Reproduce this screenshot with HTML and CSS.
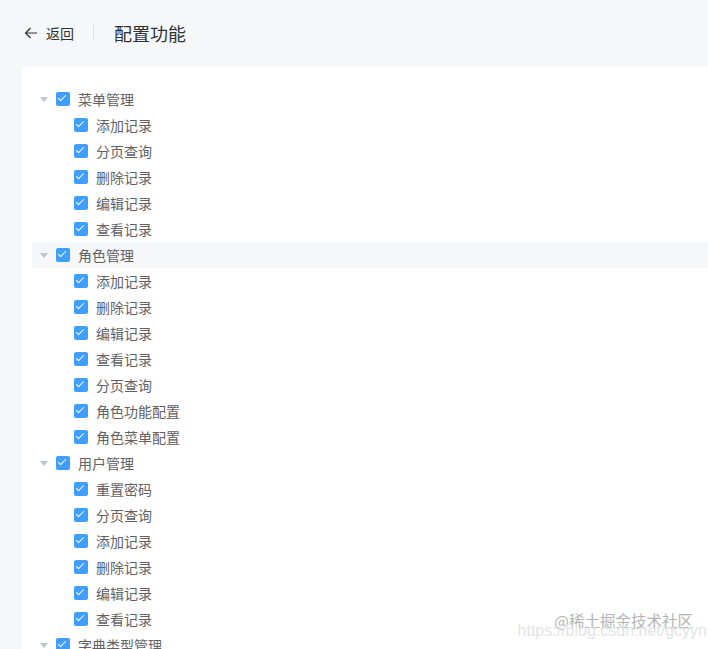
FILE: index.html
```html
<!DOCTYPE html>
<html lang="zh-CN">
<head>
   <meta charset="UTF-8">
   <title>配置功能</title>
   <link rel="stylesheet" href="styles.css">
</head>
<body>
   <div class="page-header">
       <div class="back">
           <svg class="back-icon" viewBox="0 0 14 14" width="14" height="14">
               <path d="M13 7H1.5M6.5 2 1.5 7l5 5" fill="none" stroke="#303133" stroke-width="1.2"/>
           </svg>
           <span>返回</span>
       </div>
       <div class="divider"></div>
       <div class="title">配置功能</div>
   </div>

   <div class="card">
       <div class="tree">
           <div class="node"><span class="caret"></span><span class="checkbox"></span><span class="label">菜单管理</span></div>
           <div class="node child"><span class="leaf"></span><span class="checkbox"></span><span class="label">添加记录</span></div>
           <div class="node child"><span class="leaf"></span><span class="checkbox"></span><span class="label">分页查询</span></div>
           <div class="node child"><span class="leaf"></span><span class="checkbox"></span><span class="label">删除记录</span></div>
           <div class="node child"><span class="leaf"></span><span class="checkbox"></span><span class="label">编辑记录</span></div>
           <div class="node child"><span class="leaf"></span><span class="checkbox"></span><span class="label">查看记录</span></div>

           <div class="node is-hover"><span class="caret"></span><span class="checkbox"></span><span class="label">角色管理</span></div>
           <div class="node child"><span class="leaf"></span><span class="checkbox"></span><span class="label">添加记录</span></div>
           <div class="node child"><span class="leaf"></span><span class="checkbox"></span><span class="label">删除记录</span></div>
           <div class="node child"><span class="leaf"></span><span class="checkbox"></span><span class="label">编辑记录</span></div>
           <div class="node child"><span class="leaf"></span><span class="checkbox"></span><span class="label">查看记录</span></div>
           <div class="node child"><span class="leaf"></span><span class="checkbox"></span><span class="label">分页查询</span></div>
           <div class="node child"><span class="leaf"></span><span class="checkbox"></span><span class="label">角色功能配置</span></div>
           <div class="node child"><span class="leaf"></span><span class="checkbox"></span><span class="label">角色菜单配置</span></div>

           <div class="node"><span class="caret"></span><span class="checkbox"></span><span class="label">用户管理</span></div>
           <div class="node child"><span class="leaf"></span><span class="checkbox"></span><span class="label">重置密码</span></div>
           <div class="node child"><span class="leaf"></span><span class="checkbox"></span><span class="label">分页查询</span></div>
           <div class="node child"><span class="leaf"></span><span class="checkbox"></span><span class="label">添加记录</span></div>
           <div class="node child"><span class="leaf"></span><span class="checkbox"></span><span class="label">删除记录</span></div>
           <div class="node child"><span class="leaf"></span><span class="checkbox"></span><span class="label">编辑记录</span></div>
           <div class="node child"><span class="leaf"></span><span class="checkbox"></span><span class="label">查看记录</span></div>

           <div class="node"><span class="caret"></span><span class="checkbox"></span><span class="label">字典类型管理</span></div>
       </div>
   </div>

   <div class="watermark">
       <div class="wm-main">@稀土掘金技术社区</div>
       <div class="wm-url">https://blog.csdn.net/gcyyn</div>
   </div>
</body>
</html>
```

FILE: styles.css
```css
:root {
    --page-bg: #f6f7f9;
    --text: #606266;
    --title: #303133;
    --primary: #409eff;
    --hover: #f5f7fa;
    --caret: #c0c4cc;
}

* {
    margin: 0;
    padding: 0;
    box-sizing: border-box;
}

html, body {
    height: 100%;
    overflow: hidden;
}

body {
    background: var(--page-bg);
    font-family: 'Noto Sans CJK SC', 'Noto Sans', sans-serif;
    color: var(--text);
    padding-left: 22px;
    position: relative;
}

.page-header {
    height: 66px;
    display: flex;
    align-items: center;
    padding-left: 2px;
}

.back {
    display: flex;
    align-items: center;
    gap: 8px;
    font-size: 14px;
    color: var(--title);
}

.back-icon {
    display: block;
}

.divider {
    width: 1px;
    height: 16px;
    background: #dcdfe6;
    margin: 0 20px 0 19px;
}

.title {
    font-size: 18px;
    color: var(--title);
}

.card {
    background: #fff;
    padding: 20px 0 0 10px;
    min-height: 600px;
}

.node {
    height: 26px;
    display: flex;
    align-items: center;
    font-size: 14px;
}

.node.child {
    padding-left: 18px;
}

.node.is-hover {
    background: var(--hover);
}

.caret,
.leaf {
    width: 24px;
    height: 24px;
    display: flex;
    align-items: center;
    justify-content: center;
}

.caret::before {
    content: '';
    border-left: 4px solid transparent;
    border-right: 4px solid transparent;
    border-top: 5px solid var(--caret);
    margin-top: 1px;
}

.checkbox {
    width: 14px;
    height: 14px;
    border-radius: 2px;
    background: var(--primary);
    position: relative;
    margin-right: 8px;
    flex-shrink: 0;
}

.checkbox::after {
    content: '';
    position: absolute;
    left: 4px;
    top: 1px;
    width: 3px;
    height: 7px;
    border: 1px solid #fff;
    border-left: 0;
    border-top: 0;
    transform: rotate(45deg);
}

.label {
    line-height: 26px;
}

/* watermark over the tree */
.watermark {
    position: absolute;
    right: 1px;
    bottom: 12px;
    text-align: right;
    pointer-events: none;
}

.wm-main {
    font-size: 15.5px;
    color: #b4b4b4;
    margin-right: 14px;
    line-height: 16px;
    text-shadow: 0 0 1px #fff;
}

.wm-url {
    font-family: 'Liberation Sans', sans-serif;
    font-size: 16px;
    color: #e4e4e4;
    line-height: 12px;
    margin-top: -3px;
}
```
